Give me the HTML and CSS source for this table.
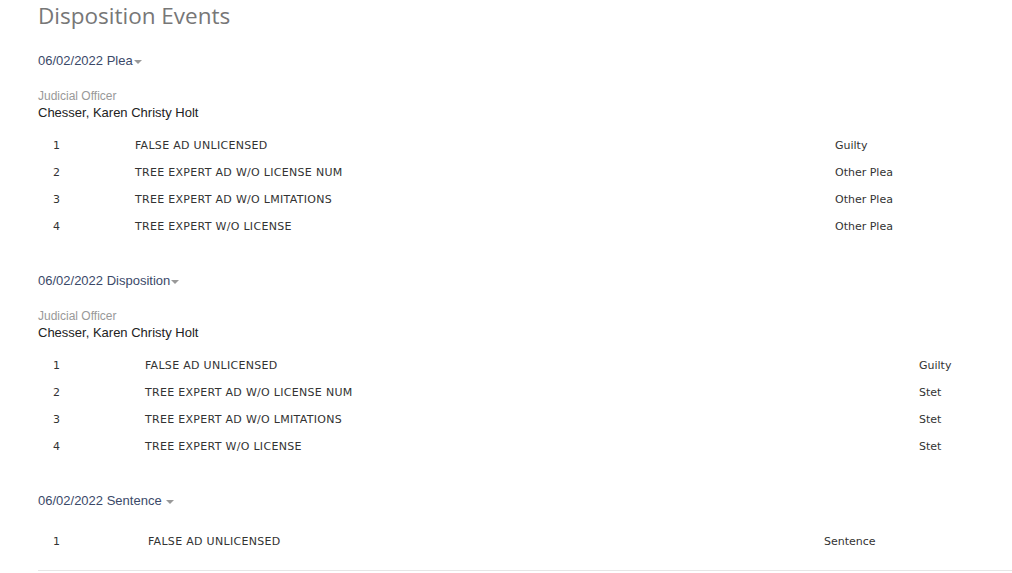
FILE: index.html
```html
<!DOCTYPE html>
<html lang="en">
<head>
  <meta charset="UTF-8">
  <title>Disposition Events</title>
  <link rel="stylesheet" href="styles.css">
</head>
<body>
  <div class="page">
    <h1 class="page-title">Disposition Events</h1>

    <div class="event">
      <div class="event-header">06/02/2022 Plea<span class="caret"></span></div>
      <div class="officer-label">Judicial Officer</div>
      <div class="officer-name">Chesser, Karen Christy Holt</div>
      <div class="charges charges-plea">
        <div class="charge-row"><span>1</span><span>FALSE AD UNLICENSED</span><span>Guilty</span></div>
        <div class="charge-row"><span>2</span><span>TREE EXPERT AD W/O LICENSE NUM</span><span>Other Plea</span></div>
        <div class="charge-row"><span>3</span><span>TREE EXPERT AD W/O LMITATIONS</span><span>Other Plea</span></div>
        <div class="charge-row"><span>4</span><span>TREE EXPERT W/O LICENSE</span><span>Other Plea</span></div>
      </div>
    </div>

    <div class="event">
      <div class="event-header">06/02/2022 Disposition<span class="caret"></span></div>
      <div class="officer-label">Judicial Officer</div>
      <div class="officer-name">Chesser, Karen Christy Holt</div>
      <div class="charges charges-disposition">
        <div class="charge-row"><span>1</span><span>FALSE AD UNLICENSED</span><span>Guilty</span></div>
        <div class="charge-row"><span>2</span><span>TREE EXPERT AD W/O LICENSE NUM</span><span>Stet</span></div>
        <div class="charge-row"><span>3</span><span>TREE EXPERT AD W/O LMITATIONS</span><span>Stet</span></div>
        <div class="charge-row"><span>4</span><span>TREE EXPERT W/O LICENSE</span><span>Stet</span></div>
      </div>
    </div>

    <div class="event event-last">
      <div class="event-header">06/02/2022 Sentence <span class="caret"></span></div>
      <div class="charges charges-sentence">
        <div class="charge-row"><span>1</span><span>FALSE AD UNLICENSED</span><span>Sentence</span></div>
      </div>
    </div>
  </div>
</body>
</html>
```

FILE: styles.css
```css
body {
  margin: 0;
  background: #ffffff;
  font-family: "Liberation Sans", Arial, sans-serif;
  color: #222;
}

.page {
  padding-left: 38px;
}

.page-title {
  margin: 0 0 19px;
  font-family: "Open Sans", sans-serif;
  font-weight: normal;
  font-size: 22.5px;
  line-height: 32px;
  color: #777;
}

.event {
  margin-bottom: 31px;
}

.event-header {
  font-size: 13px;
  line-height: 20px;
  color: #3b4969;
}

.caret {
  display: inline-block;
  vertical-align: middle;
  margin-left: 1px;
  border-left: 4px solid transparent;
  border-right: 4px solid transparent;
  border-top: 4px solid #999;
}

.officer-label {
  margin-top: 17px;
  font-size: 12px;
  line-height: 16px;
  color: #999;
}

.officer-name {
  font-size: 13px;
  line-height: 18px;
  color: #222;
}

.charges {
  margin-top: 10px;
  font-family: "DejaVu Sans", Verdana, sans-serif;
  font-size: 11px;
  color: #333;
}

.charge-row {
  display: grid;
  height: 27px;
  align-items: center;
}

.charge-row span:first-child {
  padding-left: 15px;
}

.charge-row span:nth-child(2) {
  letter-spacing: 0.3px;
}

.charges-plea .charge-row {
  grid-template-columns: 97px 700px 1fr;
}

.charges-disposition .charge-row {
  grid-template-columns: 107px 774px 1fr;
}

.charges-sentence .charge-row {
  grid-template-columns: 110px 676px 1fr;
}

.event-last {
  margin-bottom: 0;
  padding-bottom: 15px;
  border-bottom: 1px solid #e6e6e6;
}

.event-last .charges {
  margin-top: 17px;
}
```
